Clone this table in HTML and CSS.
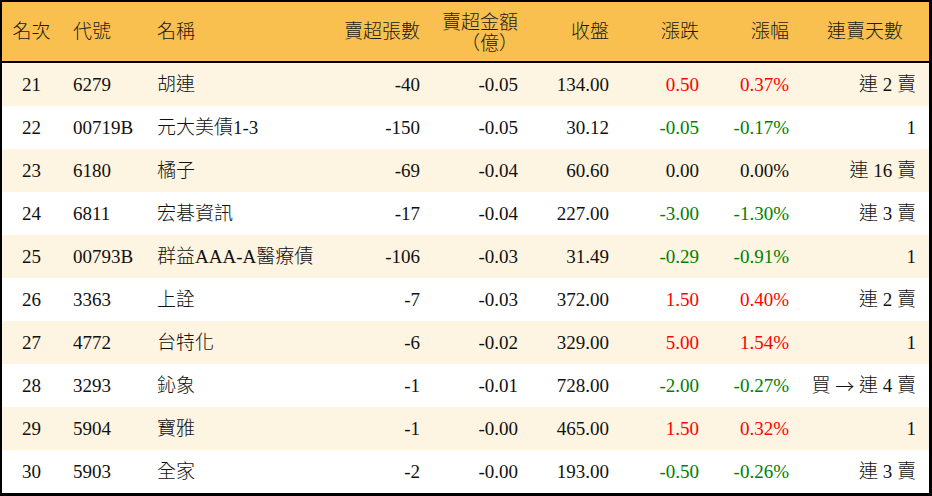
FILE: index.html
```html
<!DOCTYPE html>
<html lang="zh-Hant">
<head>
<meta charset="utf-8">
<title>賣超排行</title>
<link rel="stylesheet" href="styles.css">
</head>
<body>
<div class="board">
  <div class="row head">
    <div class="c center">名次</div>
    <div class="c left">代號</div>
    <div class="c left">名稱</div>
    <div class="c right">賣超張數</div>
    <div class="c right two">賣超金額<br>（億）</div>
    <div class="c right">收盤</div>
    <div class="c right">漲跌</div>
    <div class="c right">漲幅</div>
    <div class="c center last">連賣天數</div>
  </div>
  <div class="row alt">
    <div class="c center">21</div><div class="c left">6279</div><div class="c left">胡連</div>
    <div class="c right">-40</div><div class="c right">-0.05</div><div class="c right">134.00</div>
    <div class="c right up">0.50</div><div class="c right up">0.37%</div><div class="c right">連 2 賣</div>
  </div>
  <div class="row">
    <div class="c center">22</div><div class="c left">00719B</div><div class="c left">元大美債1-3</div>
    <div class="c right">-150</div><div class="c right">-0.05</div><div class="c right">30.12</div>
    <div class="c right down">-0.05</div><div class="c right down">-0.17%</div><div class="c right">1</div>
  </div>
  <div class="row alt">
    <div class="c center">23</div><div class="c left">6180</div><div class="c left">橘子</div>
    <div class="c right">-69</div><div class="c right">-0.04</div><div class="c right">60.60</div>
    <div class="c right">0.00</div><div class="c right">0.00%</div><div class="c right">連 16 賣</div>
  </div>
  <div class="row">
    <div class="c center">24</div><div class="c left">6811</div><div class="c left">宏碁資訊</div>
    <div class="c right">-17</div><div class="c right">-0.04</div><div class="c right">227.00</div>
    <div class="c right down">-3.00</div><div class="c right down">-1.30%</div><div class="c right">連 3 賣</div>
  </div>
  <div class="row alt">
    <div class="c center">25</div><div class="c left">00793B</div><div class="c left">群益AAA-A醫療債</div>
    <div class="c right">-106</div><div class="c right">-0.03</div><div class="c right">31.49</div>
    <div class="c right down">-0.29</div><div class="c right down">-0.91%</div><div class="c right">1</div>
  </div>
  <div class="row">
    <div class="c center">26</div><div class="c left">3363</div><div class="c left">上詮</div>
    <div class="c right">-7</div><div class="c right">-0.03</div><div class="c right">372.00</div>
    <div class="c right up">1.50</div><div class="c right up">0.40%</div><div class="c right">連 2 賣</div>
  </div>
  <div class="row alt">
    <div class="c center">27</div><div class="c left">4772</div><div class="c left">台特化</div>
    <div class="c right">-6</div><div class="c right">-0.02</div><div class="c right">329.00</div>
    <div class="c right up">5.00</div><div class="c right up">1.54%</div><div class="c right">1</div>
  </div>
  <div class="row">
    <div class="c center">28</div><div class="c left">3293</div><div class="c left">鈊象</div>
    <div class="c right">-1</div><div class="c right">-0.01</div><div class="c right">728.00</div>
    <div class="c right down">-2.00</div><div class="c right down">-0.27%</div><div class="c right">買&nbsp;<span class="arrow">→</span>&nbsp;連 4 賣</div>
  </div>
  <div class="row alt">
    <div class="c center">29</div><div class="c left">5904</div><div class="c left">寶雅</div>
    <div class="c right">-1</div><div class="c right">-0.00</div><div class="c right">465.00</div>
    <div class="c right up">1.50</div><div class="c right up">0.32%</div><div class="c right">1</div>
  </div>
  <div class="row">
    <div class="c center">30</div><div class="c left">5903</div><div class="c left">全家</div>
    <div class="c right">-2</div><div class="c right">-0.00</div><div class="c right">193.00</div>
    <div class="c right down">-0.50</div><div class="c right down">-0.26%</div><div class="c right">連 3 賣</div>
  </div>
</div>
</body>
</html>
```

FILE: styles.css
```css
html, body {
  margin: 0;
  padding: 0;
  background: #ffffff;
}

.board {
  width: 932px;
  height: 496px;
  box-sizing: border-box;
  border-style: solid;
  border-color: #000000;
  border-width: 2px 3px 3px 2px;
  font-family: "Liberation Serif", "Noto Sans CJK TC", serif;
  font-size: 19px;
  font-weight: 300;
  color: #111111;
  background: #ffffff;
}

.row {
  display: grid;
  grid-template-columns: 59px 84px 185px 102px 98px 91px 90px 90px 128px;
  height: 43px;
  background: #ffffff;
}

.row.alt {
  background: #fdf4e1;
}

.row.head {
  height: 61px;
  box-sizing: border-box;
  border-bottom: 2px solid #000000;
  background: #f9c04f;
  color: #1a1a1a;
}

.c {
  display: flex;
  align-items: center;
  white-space: nowrap;
  line-height: 21px;
}

.c.left {
  justify-content: flex-start;
  padding-left: 12px;
}

.c.right {
  justify-content: flex-end;
  padding-right: 12px;
  text-align: right;
}

.c.center {
  justify-content: center;
}

.row .c:last-child.right {
  padding-right: 13px;
}

.c.two {
  padding-top: 2px;
}

.arrow {
  font-family: "Noto Sans CJK TC", sans-serif;
  font-weight: 300;
}

.up {
  color: #ff0000;
}

.down {
  color: #008000;
}
```
